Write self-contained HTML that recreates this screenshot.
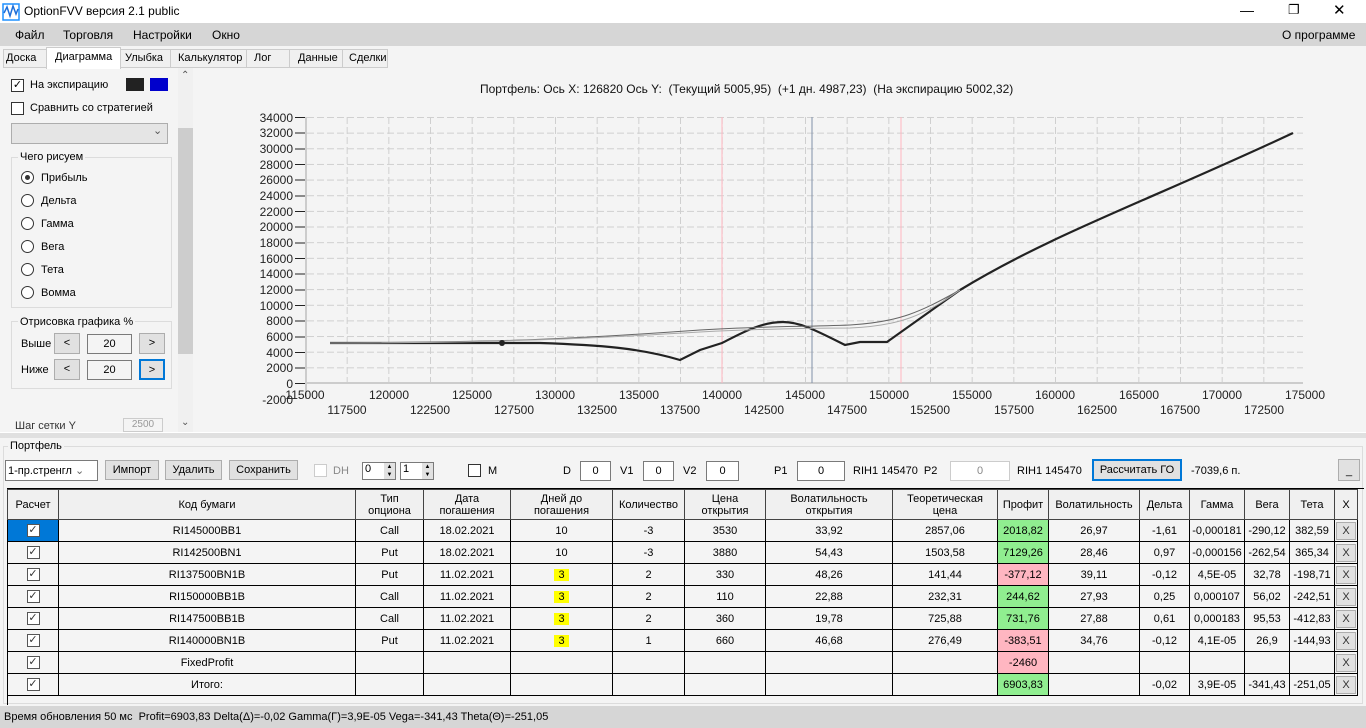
<!DOCTYPE html>
<html><head><meta charset="utf-8">
<style>
*{box-sizing:border-box;margin:0;padding:0}
body{width:1366px;height:728px;overflow:hidden;background:#f4f4f4;font-family:"Liberation Sans",sans-serif;font-size:11px;color:#000;position:relative}
.a{position:absolute}
.cb{position:absolute;width:13px;height:13px;border:1px solid #333;background:#fff}
.rb{position:absolute;width:13px;height:13px;border:1px solid #333;border-radius:50%;background:#fff}
.btn{position:absolute;background:#e1e1e1;border:1px solid #adadad;text-align:center}
.tb{position:absolute;background:#fff;border:1px solid #7a7a7a;text-align:center}
table{border-collapse:collapse;position:absolute;left:7px;top:489px;font-size:11px}
td{border:1px solid #000;text-align:center;height:22px;padding:0;white-space:nowrap}
tr.h td{height:30px;background:#f0f0f0;line-height:12px;border-color:#444}
.g{background:#90ee90}.r{background:#ffb6c1}
.ck{display:inline-block;width:13px;height:13px;border:1px solid #555;background:#fff;font-size:11px;line-height:11px;color:#333;vertical-align:middle}
.x{background:#e1e1e1;border:1px solid #adadad;display:inline-block;width:20px;height:18px;line-height:17px;color:#333}
.y{background:#ffff00;padding:0 4px}
</style></head><body>
<div class="a" style="left:0;top:0;width:1366px;height:23px;background:#fff"></div>
<svg class="a" style="left:2px;top:3px" width="18" height="18"><rect x="1" y="1" width="16" height="16" fill="none" stroke="#1e90ff" stroke-width="1.5"/><path d="M2 10 L5 4 L8 13 L11 3 L14 11 L16 6" fill="none" stroke="#1e6fd9" stroke-width="1.5"/></svg>
<div class="a" style="left:24px;top:4px;font-size:12px">OptionFVV версия 2.1 public</div>
<div class="a" style="left:1240px;top:2px;font-size:14px">—</div>
<div class="a" style="left:1288px;top:2px;font-size:13px">❐</div>
<div class="a" style="left:1333px;top:1px;font-size:15px">✕</div>
<div class="a" style="left:0;top:23px;width:1366px;height:23px;background:#d6d6d6"></div>
<div class="a" style="left:15px;top:28px;font-size:12px">Файл</div>
<div class="a" style="left:63px;top:28px;font-size:12px">Торговля</div>
<div class="a" style="left:133px;top:28px;font-size:12px">Настройки</div>
<div class="a" style="left:212px;top:28px;font-size:12px">Окно</div>
<div class="a" style="left:1282px;top:28px;font-size:12px">О программе</div>
<div class="a" style="left:3px;top:49px;width:385px;height:19px;border:1px solid #ccc;background:#f0f0f0"></div>
<div class="a" style="left:3px;top:52px">&nbsp;Доска</div>
<div class="a" style="left:46px;top:47px;width:75px;height:22px;background:#fff;border:1px solid #ccc;border-bottom:none;padding:3px 0 0 8px">Диаграмма</div>
<div class="a" style="left:125px;top:52px">Улыбка</div>
<div class="a" style="left:170px;top:49px;width:77px;height:19px;border-left:1px solid #ccc;border-right:1px solid #ccc;padding:3px 0 0 7px">Калькулятор</div>
<div class="a" style="left:254px;top:52px">Лог</div>
<div class="a" style="left:289px;top:49px;width:54px;height:19px;border-left:1px solid #ccc;border-right:1px solid #ccc;padding:3px 0 0 8px">Данные</div>
<div class="a" style="left:349px;top:52px">Сделки</div>
<div class="cb" style="left:11px;top:79px;font-size:11px;line-height:10px;text-align:center">✓</div>
<div class="a" style="left:30px;top:79px">На экспирацию</div>
<div class="a" style="left:126px;top:78px;width:18px;height:13px;background:#222"></div>
<div class="a" style="left:150px;top:78px;width:18px;height:13px;background:#0000cc"></div>
<div class="cb" style="left:11px;top:102px"></div>
<div class="a" style="left:30px;top:102px">Сравнить со стратегией</div>
<div class="a" style="left:11px;top:123px;width:157px;height:21px;background:#e5e5e5;border:1px solid #adadad"></div>
<div class="a" style="left:153px;top:124px;font-size:11px;color:#555">⌄</div>
<div class="a" style="left:11px;top:157px;width:161px;height:151px;border:1px solid #dcdcdc"></div>
<div class="a" style="left:18px;top:151px;background:#f4f4f4;padding:0 2px">Чего рисуем</div>
<div class="rb" style="left:21px;top:171px"></div><div class="a" style="left:25px;top:175px;width:5px;height:5px;border-radius:50%;background:#333"></div>
<div class="a" style="left:41px;top:172px">Прибыль</div>
<div class="rb" style="left:21px;top:194px"></div><div class="a" style="left:41px;top:195px">Дельта</div>
<div class="rb" style="left:21px;top:217px"></div><div class="a" style="left:41px;top:218px">Гамма</div>
<div class="rb" style="left:21px;top:240px"></div><div class="a" style="left:41px;top:241px">Вега</div>
<div class="rb" style="left:21px;top:263px"></div><div class="a" style="left:41px;top:264px">Тета</div>
<div class="rb" style="left:21px;top:286px"></div><div class="a" style="left:41px;top:287px">Вомма</div>
<div class="a" style="left:11px;top:321px;width:161px;height:68px;border:1px solid #dcdcdc"></div>
<div class="a" style="left:18px;top:316px;background:#f4f4f4;padding:0 2px">Отрисовка графика %</div>
<div class="a" style="left:21px;top:338px">Выше</div>
<div class="btn" style="left:54px;top:333px;width:26px;height:21px;line-height:19px">&lt;</div>
<div class="tb" style="left:87px;top:334px;width:45px;height:20px;line-height:18px;background:#f4f4f4">20</div>
<div class="btn" style="left:139px;top:333px;width:26px;height:21px;line-height:19px">&gt;</div>
<div class="a" style="left:21px;top:364px">Ниже</div>
<div class="btn" style="left:54px;top:359px;width:26px;height:21px;line-height:19px">&lt;</div>
<div class="tb" style="left:87px;top:360px;width:45px;height:20px;line-height:18px;background:#f4f4f4">20</div>
<div class="btn" style="left:139px;top:359px;width:26px;height:21px;line-height:19px;border:2px solid #0078d7">&gt;</div>
<div class="a" style="left:15px;top:420px;color:#333">Шаг сетки Y</div>
<div class="tb" style="left:123px;top:418px;width:40px;height:14px;color:#999;background:#f4f4f4;border-color:#ccc;font-size:10px">2500</div>
<div class="a" style="left:178px;top:68px;width:15px;height:364px;background:#f0f0f0"></div>
<div class="a" style="left:178px;top:128px;width:15px;height:226px;background:#cdcdcd"></div>
<div class="a" style="left:181px;top:70px;font-size:10px;color:#555">⌃</div>
<div class="a" style="left:181px;top:417px;font-size:10px;color:#555">⌄</div>
<div class="a" style="left:0;top:432px;width:1366px;height:6px;background:#e0e0e0;border-top:1px solid #fff"></div>
<div class="a" style="left:480px;top:82px;font-size:12px;color:#111">Портфель: Ось X: 126820 Ось Y:&nbsp; (Текущий 5005,95)&nbsp; (+1 дн. 4987,23)&nbsp; (На экспирацию 5002,32)</div>
<svg class="a" style="left:0;top:0" width="1366" height="432" font-family="Liberation Sans" font-size="12">
<defs>
<pattern id="gv" x="305" y="0" width="41.667" height="10" patternUnits="userSpaceOnUse"><line x1="0.5" y1="0" x2="0.5" y2="10" stroke="#cfcfcf" stroke-dasharray="4,3"/></pattern>
<pattern id="gh" x="0" y="117" width="10" height="15.647" patternUnits="userSpaceOnUse"><line x1="0" y1="0.5" x2="10" y2="0.5" stroke="#cfcfcf" stroke-dasharray="4,3"/></pattern>
</defs>
<rect x="306" y="117" width="997" height="266" fill="url(#gv)"/>
<rect x="306" y="117" width="997" height="266" fill="url(#gh)"/>
<line x1="306" y1="117" x2="306" y2="399" stroke="#ccc" stroke-width="2"/>
<line x1="306" y1="383" x2="1303" y2="383" stroke="#ccc" stroke-width="2"/>
<line x1="722" y1="117" x2="722" y2="383" stroke="#ffb6c1"/>
<line x1="901" y1="117" x2="901" y2="383" stroke="#ffb6c1"/>
<line x1="812" y1="117" x2="812" y2="383" stroke="#8090a8"/>
<g text-anchor="end" fill="#222">
<text x="293" y="122">34000</text><text x="293" y="137">32000</text><text x="293" y="153">30000</text><text x="293" y="169">28000</text><text x="293" y="184">26000</text><text x="293" y="200">24000</text><text x="293" y="216">22000</text><text x="293" y="231">20000</text><text x="293" y="247">18000</text><text x="293" y="263">16000</text><text x="293" y="278">14000</text><text x="293" y="294">12000</text><text x="293" y="310">10000</text><text x="293" y="325">8000</text><text x="293" y="341">6000</text><text x="293" y="357">4000</text><text x="293" y="372">2000</text><text x="293" y="388">0</text><text x="293" y="404">-2000</text>
</g>
<g stroke="#222"><path d="M295 117.5h10M295 133h10M295 149h10M295 164.5h10M295 180h10M295 196h10M295 211.5h10M295 227h10M295 243h10M295 258.5h10M295 274h10M295 290h10M295 305.5h10M295 321h10M295 337h10M295 352.5h10M295 368h10M295 383.5h10"/></g>
<g text-anchor="middle" fill="#222">
<text x="305" y="399">115000</text><text x="389" y="399">120000</text><text x="472" y="399">125000</text><text x="555" y="399">130000</text><text x="639" y="399">135000</text><text x="722" y="399">140000</text><text x="805" y="399">145000</text><text x="889" y="399">150000</text><text x="972" y="399">155000</text><text x="1055" y="399">160000</text><text x="1139" y="399">165000</text><text x="1222" y="399">170000</text><text x="1305" y="399">175000</text>
<text x="347" y="414">117500</text><text x="430" y="414">122500</text><text x="514" y="414">127500</text><text x="597" y="414">132500</text><text x="680" y="414">137500</text><text x="764" y="414">142500</text><text x="847" y="414">147500</text><text x="930" y="414">152500</text><text x="1014" y="414">157500</text><text x="1097" y="414">162500</text><text x="1180" y="414">167500</text><text x="1264" y="414">172500</text>
</g>
<path d="M330 343 L540 343 C600 345 640 348 680 360 L700 350 L722 343 C740 334 760 322 783 322 C800 322 815 330 845 345 L860 342 L887 342 L960 290 C1050 235 1150 200 1293 133" fill="none" stroke="#222" stroke-width="2.2"/>
<path d="M330 343 C500 342 560 340 700 330 C760 326 800 327 850 325 C900 322 920 312 960 290" fill="none" stroke="#666" stroke-width="1"/>
<path d="M330 343 C500 343 600 338 700 332 C760 329 800 328 850 328 C900 326 925 315 960 290" fill="none" stroke="#aaa" stroke-width="1"/>
<circle cx="502" cy="343" r="3" fill="#222"/>
</svg>
<div class="a" style="left:3px;top:446px;width:1360px;height:258px;border:1px solid #dcdcdc"></div>
<div class="a" style="left:8px;top:440px;background:#f4f4f4;padding:0 2px">Портфель</div>
<div class="a" style="left:5px;top:460px;width:93px;height:21px;background:#fff;border:1px solid #7a7a7a;padding:3px 2px">1-пр.стренгл <span style="color:#666">⌄</span></div>
<div class="btn" style="left:105px;top:460px;width:54px;height:20px;line-height:18px">Импорт</div>
<div class="btn" style="left:165px;top:460px;width:57px;height:20px;line-height:18px">Удалить</div>
<div class="btn" style="left:229px;top:460px;width:69px;height:20px;line-height:18px">Сохранить</div>
<div class="cb" style="left:314px;top:464px;border-color:#ccc"></div>
<div class="a" style="left:333px;top:465px;color:#888">DH</div>
<div class="tb" style="left:362px;top:462px;width:34px;height:18px;text-align:left;padding-left:2px">0</div>
<div class="tb" style="left:400px;top:462px;width:34px;height:18px;text-align:left;padding-left:2px">1</div>
<div class="a" style="left:384px;top:463px;width:11px;height:16px;background:#e1e1e1;font-size:6px;line-height:8px;text-align:center">▲<br>▼</div>
<div class="a" style="left:422px;top:463px;width:11px;height:16px;background:#e1e1e1;font-size:6px;line-height:8px;text-align:center">▲<br>▼</div>
<div class="cb" style="left:468px;top:464px"></div>
<div class="a" style="left:488px;top:465px">M</div>
<div class="a" style="left:563px;top:465px">D</div><div class="tb" style="left:580px;top:461px;width:31px;height:20px;line-height:18px">0</div>
<div class="a" style="left:620px;top:465px">V1</div><div class="tb" style="left:643px;top:461px;width:31px;height:20px;line-height:18px">0</div>
<div class="a" style="left:683px;top:465px">V2</div><div class="tb" style="left:706px;top:461px;width:33px;height:20px;line-height:18px">0</div>
<div class="a" style="left:774px;top:465px">P1</div><div class="tb" style="left:797px;top:461px;width:48px;height:20px;line-height:18px">0</div>
<div class="a" style="left:853px;top:465px">RIH1 145470&nbsp; P2</div>
<div class="tb" style="left:950px;top:461px;width:60px;height:20px;line-height:18px;border-color:#ccc;color:#888">0</div>
<div class="a" style="left:1017px;top:465px">RIH1 145470</div>
<div class="btn" style="left:1092px;top:459px;width:90px;height:22px;line-height:18px;border:2px solid #0078d7">Рассчитать ГО</div>
<div class="a" style="left:1191px;top:465px">-7039,6 п.</div>
<div class="btn" style="left:1338px;top:459px;width:22px;height:22px;line-height:22px">_</div>
<div class="a" style="left:7px;top:488px;width:1357px;height:217px;border:1px solid #000;border-right:none;border-bottom:none"></div>
<table>
<colgroup><col style="width:51px"><col style="width:297px"><col style="width:68px"><col style="width:87px"><col style="width:102px"><col style="width:72px"><col style="width:81px"><col style="width:127px"><col style="width:105px"><col style="width:51px"><col style="width:91px"><col style="width:50px"><col style="width:55px"><col style="width:45px"><col style="width:45px"><col style="width:23px"></colgroup>
<tr class="h"><td>Расчет</td><td>Код бумаги</td><td>Тип<br>опциона</td><td>Дата<br>погашения</td><td>Дней до<br>погашения</td><td>Количество</td><td>Цена<br>открытия</td><td>Волатильность<br>открытия</td><td>Теоретическая<br>цена</td><td>Профит</td><td>Волатильность</td><td>Дельта</td><td>Гамма</td><td>Вега</td><td>Тета</td><td>X</td></tr>
<tr><td style="background:#0078d7"><span class="ck">✓</span></td><td>RI145000BB1</td><td>Call</td><td>18.02.2021</td><td>10</td><td>-3</td><td>3530</td><td>33,92</td><td>2857,06</td><td class="g">2018,82</td><td>26,97</td><td>-1,61</td><td>-0,000181</td><td>-290,12</td><td>382,59</td><td><span class="x">X</span></td></tr>
<tr><td><span class="ck">✓</span></td><td>RI142500BN1</td><td>Put</td><td>18.02.2021</td><td>10</td><td>-3</td><td>3880</td><td>54,43</td><td>1503,58</td><td class="g">7129,26</td><td>28,46</td><td>0,97</td><td>-0,000156</td><td>-262,54</td><td>365,34</td><td><span class="x">X</span></td></tr>
<tr><td><span class="ck">✓</span></td><td>RI137500BN1B</td><td>Put</td><td>11.02.2021</td><td><span class="y">3</span></td><td>2</td><td>330</td><td>48,26</td><td>141,44</td><td class="r">-377,12</td><td>39,11</td><td>-0,12</td><td>4,5E-05</td><td>32,78</td><td>-198,71</td><td><span class="x">X</span></td></tr>
<tr><td><span class="ck">✓</span></td><td>RI150000BB1B</td><td>Call</td><td>11.02.2021</td><td><span class="y">3</span></td><td>2</td><td>110</td><td>22,88</td><td>232,31</td><td class="g">244,62</td><td>27,93</td><td>0,25</td><td>0,000107</td><td>56,02</td><td>-242,51</td><td><span class="x">X</span></td></tr>
<tr><td><span class="ck">✓</span></td><td>RI147500BB1B</td><td>Call</td><td>11.02.2021</td><td><span class="y">3</span></td><td>2</td><td>360</td><td>19,78</td><td>725,88</td><td class="g">731,76</td><td>27,88</td><td>0,61</td><td>0,000183</td><td>95,53</td><td>-412,83</td><td><span class="x">X</span></td></tr>
<tr><td><span class="ck">✓</span></td><td>RI140000BN1B</td><td>Put</td><td>11.02.2021</td><td><span class="y">3</span></td><td>1</td><td>660</td><td>46,68</td><td>276,49</td><td class="r">-383,51</td><td>34,76</td><td>-0,12</td><td>4,1E-05</td><td>26,9</td><td>-144,93</td><td><span class="x">X</span></td></tr>
<tr><td><span class="ck">✓</span></td><td>FixedProfit</td><td></td><td></td><td></td><td></td><td></td><td></td><td></td><td class="r">-2460</td><td></td><td></td><td></td><td></td><td></td><td><span class="x">X</span></td></tr>
<tr><td><span class="ck">✓</span></td><td>Итого:</td><td></td><td></td><td></td><td></td><td></td><td></td><td></td><td class="g">6903,83</td><td></td><td>-0,02</td><td>3,9E-05</td><td>-341,43</td><td>-251,05</td><td><span class="x">X</span></td></tr>
</table>
<div class="a" style="left:0;top:706px;width:1366px;height:22px;background:#d6d6d6;padding:5px 0 0 4px;font-size:11px">Время обновления 50 мс&nbsp; Profit=6903,83 Delta(Δ)=-0,02 Gamma(Γ)=3,9E-05 Vega=-341,43 Theta(Θ)=-251,05</div>
</body></html>
